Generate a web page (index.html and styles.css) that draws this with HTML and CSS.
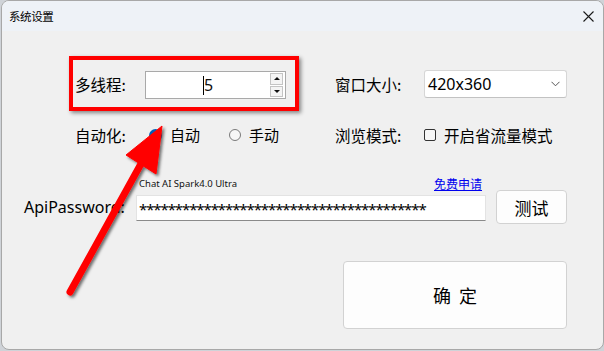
FILE: index.html
```html
<!DOCTYPE html>
<html lang="zh-CN">
<head>
    <meta charset="UTF-8">
    <title>系统设置</title>
    <link rel="stylesheet" href="styles.css">
</head>
<body>
    <div class="window">
        <div class="titlebar">
            <span class="title">系统设置</span>
            <svg class="close" width="11" height="11" viewBox="0 0 11 11">
                <path d="M0.5 0.5 L10.5 10.5 M10.5 0.5 L0.5 10.5" stroke="#1a1a1a" stroke-width="1.1" fill="none"/>
            </svg>
        </div>

        <div class="content">
            <div class="row row-threads">
                <div class="group left">
                    <span class="lbl lbl-threads">多线程:</span>
                    <div class="spin">
                        <div class="spin-value"><span class="caret"></span>5</div>
                        <div class="spin-btns">
                            <div class="spin-btn"><span class="tri tri-up"></span></div>
                            <div class="spin-btn"><span class="tri tri-down"></span></div>
                        </div>
                    </div>
                </div>
                <div class="group right">
                    <span class="lbl lbl-right">窗口大小:</span>
                    <div class="combo">
                        <span>420x360</span>
                        <svg width="9" height="6" viewBox="0 0 9 6">
                            <path d="M0.5 0.8 L4.5 4.8 L8.5 0.8" stroke="#555" stroke-width="1" fill="none"/>
                        </svg>
                    </div>
                </div>
            </div>

            <div class="row row-mode">
                <div class="group left">
                    <span class="lbl lbl-auto">自动化:</span>
                    <span class="radio checked"></span>
                    <span class="opt">自动</span>
                    <span class="radio"></span>
                    <span class="opt">手动</span>
                </div>
                <div class="group right">
                    <span class="lbl lbl-right">浏览模式:</span>
                    <span class="check"></span>
                    <span class="opt">开启省流量模式</span>
                </div>
            </div>

            <div class="row row-hint">
                <span class="model">Chat AI Spark4.0 Ultra</span>
                <a class="apply" href="#">免费申请</a>
            </div>

            <div class="row row-api">
                <span class="lbl lbl-api">ApiPassword:</span>
                <div class="pwd">****************************************</div>
                <button class="btn btn-test">测试</button>
            </div>

            <div class="row row-ok">
                <button class="btn btn-ok">确&nbsp;&nbsp;定</button>
            </div>
        </div>
    </div>

    <!-- annotation overlay -->
    <div class="highlight"></div>
    <svg class="arrow" width="604" height="351" viewBox="0 0 604 351">
        <defs>
            <filter id="shadow" x="-20%" y="-20%" width="140%" height="140%">
                <feDropShadow dx="2" dy="2" stdDeviation="1.6" flood-color="#000" flood-opacity="0.55"/>
            </filter>
        </defs>
        <g filter="url(#shadow)" fill="#ff0000" stroke="#ff0000">
            <line x1="70" y1="292" x2="142" y2="162" stroke-width="7" stroke-linecap="round"/>
            <polygon points="162,126 126,155 156,174" stroke-width="1" stroke-linejoin="round"/>
        </g>
    </svg>
</body>
</html>
```

FILE: styles.css
```css
body {
    margin: 0;
    width: 604px;
    height: 351px;
    position: relative;
    overflow: hidden;
    background: #cfd3d8;
    font-family: "Noto Sans", "Noto Sans CJK SC", sans-serif;
    color: #000;
}

.window {
    box-sizing: border-box;
    width: 603px;
    height: 350px;
    margin-left: 1px;
    border: 1px solid #a8a8a8;
    border-radius: 8px;
    background: #f0f0f0;
    overflow: hidden;
}

.titlebar {
    height: 30px;
    background: #eef2f7;
    display: flex;
    align-items: center;
    justify-content: space-between;
    padding: 0 9px 0 7px;
}

.title {
    font-family: "Noto Sans CJK SC", sans-serif;
    font-size: 11.5px;
    letter-spacing: -0.4px;
    margin-top: -1px;
}

.close {
    margin-top: 1px;
}

.content {
    display: flex;
    flex-direction: column;
}

.row {
    display: flex;
    align-items: center;
}

.group {
    display: flex;
    align-items: center;
}

.left {
    width: 333px;
    padding-left: 73px;
    box-sizing: border-box;
}

.lbl {
    font-family: "Noto Sans CJK SC", sans-serif;
    font-size: 15.5px;
    line-height: 20px;
    white-space: nowrap;
}

.lbl-threads { width: 70px; }
.lbl-auto { width: 73px; }
.lbl-right { width: 89px; }

.row-threads {
    margin-top: 38px;
    height: 30px;
}

.spin {
    box-sizing: border-box;
    width: 141px;
    height: 28px;
    margin-top: 2px;
    border: 1px solid #a9a9a9;
    background: #fff;
    display: flex;
    align-items: center;
}

.spin-value {
    flex: 1;
    text-align: center;
    font-size: 16px;
    line-height: 20px;
    color: #111;
}

.caret {
    display: inline-block;
    width: 1px;
    height: 19px;
    background: #000;
    vertical-align: -4px;
}

.spin-btns {
    width: 13px;
    height: 24px;
    margin-right: 2px;
    display: flex;
    flex-direction: column;
    gap: 1px;
}

.spin-btn {
    flex: 1;
    border: 1px solid #c4c4c4;
    background: #f4f4f4;
    display: flex;
    align-items: center;
    justify-content: center;
}

.tri {
    width: 0;
    height: 0;
    border-left: 3px solid transparent;
    border-right: 3px solid transparent;
}

.tri-up { border-bottom: 3px solid #111; }
.tri-down { border-top: 3px solid #111; }

.combo {
    box-sizing: border-box;
    width: 143px;
    height: 28px;
    margin-top: -1px;
    border: 1px solid #d6d6d6;
    border-bottom-color: #c2c2c2;
    border-radius: 3px;
    background: #fff;
    display: flex;
    align-items: center;
    justify-content: space-between;
    padding: 0 6px 0 3px;
    font-size: 16px;
}

.row-mode {
    margin-top: 26px;
    height: 20px;
}

.radio {
    box-sizing: border-box;
    width: 12px;
    height: 12px;
    border-radius: 50%;
    border: 1px solid #7a7a7a;
    background: #f7f7f7;
    margin-right: 8px;
}

.radio.checked {
    width: 13px;
    height: 13px;
    border: 4px solid #005fb8;
    background: #fff;
    margin-left: 1px;
}

.opt {
    font-family: "Noto Sans CJK SC", sans-serif;
    font-size: 15px;
    line-height: 20px;
    margin-right: 29px;
}

.check {
    box-sizing: border-box;
    width: 12px;
    height: 12px;
    border: 1px solid #333;
    border-radius: 2px;
    background: #f7f7f7;
    margin-right: 8px;
}

.right .opt {
    font-size: 15.5px;
    margin-right: 0;
}

.row-hint {
    margin-top: 31px;
    height: 14px;
}

.model {
    margin-left: 137px;
    width: 295px;
    font-size: 9.5px;
    color: #111;
}

.apply {
    font-family: "Noto Sans CJK SC", sans-serif;
    font-size: 12px;
    color: #0000ee;
    text-decoration: underline;
}

.row-api {
    height: 34px;
}

.lbl-api {
    font-family: "Noto Sans", sans-serif;
    font-size: 16px;
    width: 112px;
    padding-left: 22px;
}

.pwd {
    box-sizing: border-box;
    width: 350px;
    height: 26px;
    margin-top: 2px;
    background: #fff;
    border: 1px solid #e3e3e3;
    border-bottom: 1px solid #8a8a8a;
    font-size: 15px;
    line-height: 26px;
    padding-left: 2px;
    letter-spacing: -1.1px;
    overflow: hidden;
    white-space: nowrap;
}

.btn {
    box-sizing: border-box;
    border: 1px solid #d2d2d2;
    border-radius: 4px;
    background: #fdfdfd;
    font-family: "Noto Sans CJK SC", sans-serif;
    color: #000;
    padding: 0;
}

.btn-test {
    width: 71px;
    height: 34px;
    margin-left: 10px;
    font-size: 17px;
}

.row-ok {
    margin-top: 37px;
}

.btn-ok {
    width: 224px;
    height: 68px;
    margin-left: 341px;
    font-size: 18px;
}

.highlight {
    position: absolute;
    left: 69px;
    top: 56px;
    width: 230px;
    height: 55px;
    box-sizing: border-box;
    border: 4px solid #ff0000;
    box-shadow: 2px 2px 4px rgba(0, 0, 0, 0.45);
}

.arrow {
    position: absolute;
    left: 0;
    top: 0;
    pointer-events: none;
}
```
